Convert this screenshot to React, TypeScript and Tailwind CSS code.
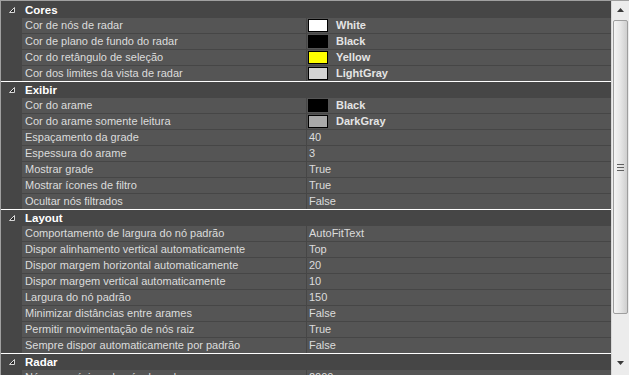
type Row = { name: string; value: string; color?: string };
type Category = { title: string; rows: Row[] };

const categories: Category[] = [
  {
    title: "Cores",
    rows: [
      { name: "Cor de nós de radar", value: "White", color: "#ffffff" },
      { name: "Cor de plano de fundo do radar", value: "Black", color: "#000000" },
      { name: "Cor do retângulo de seleção", value: "Yellow", color: "#ffff00" },
      { name: "Cor dos limites da vista de radar", value: "LightGray", color: "#d3d3d3" },
    ],
  },
  {
    title: "Exibir",
    rows: [
      { name: "Cor do arame", value: "Black", color: "#000000" },
      { name: "Cor do arame somente leitura", value: "DarkGray", color: "#a9a9a9" },
      { name: "Espaçamento da grade", value: "40" },
      { name: "Espessura do arame", value: "3" },
      { name: "Mostrar grade", value: "True" },
      { name: "Mostrar ícones de filtro", value: "True" },
      { name: "Ocultar nós filtrados", value: "False" },
    ],
  },
  {
    title: "Layout",
    rows: [
      { name: "Comportamento de largura do nó padrão", value: "AutoFitText" },
      { name: "Dispor alinhamento vertical automaticamente", value: "Top" },
      { name: "Dispor margem horizontal automaticamente", value: "20" },
      { name: "Dispor margem vertical automaticamente", value: "10" },
      { name: "Largura do nó padrão", value: "150" },
      { name: "Minimizar distâncias entre arames", value: "False" },
      { name: "Permitir movimentação de nós raiz", value: "True" },
      { name: "Sempre dispor automaticamente por padrão", value: "False" },
    ],
  },
  {
    title: "Radar",
    rows: [{ name: "Número máximo de nós do radar", value: "2000" }],
  },
];

const Glyph = () => (
  <svg width="6" height="6" viewBox="0 0 6 6" className="block">
    <polygon points="5.5,0.5 5.5,5.5 0.5,5.5" fill="#2a2a2a" stroke="#d8d8d8" strokeWidth="1" />
  </svg>
);

const PropRow = ({ row, last }: { row: Row; last: boolean }) => (
  <div
    className={`flex h-[16px] shrink-0 border-b ${last ? "border-white" : "border-[#464646]"}`}
  >
    <div className="w-[21px] shrink-0 bg-[#464646]" />
    <div className="w-[284px] shrink-0 bg-[#555555] pl-[3px] leading-[15px] text-[#dcdcdc] whitespace-nowrap overflow-hidden">
      {row.name}
    </div>
    <div className="w-px shrink-0 bg-[#464646]" />
    {row.color ? (
      <div className="flex-1 bg-[#555555] flex items-center pl-[1px]">
        <div
          className="w-[20px] h-[13px] border border-black shrink-0"
          style={{ backgroundColor: row.color }}
        />
        <span className="ml-[8px] font-bold text-[#e4e4e4] leading-[15px]">{row.value}</span>
      </div>
    ) : (
      <div className="flex-1 bg-[#555555] pl-[2px] leading-[15px] text-[#dcdcdc]">{row.value}</div>
    )}
  </div>
);

const Scrollbar = () => (
  <div className="w-[18px] shrink-0 bg-[#ececec] border-l border-[#d8d8d8] flex flex-col">
    <div className="h-[17px] flex items-center justify-center">
      <svg width="7" height="4" viewBox="0 0 7 4">
        <polygon points="3.5,0 7,4 0,4" fill="#3a3a3a" />
      </svg>
    </div>
    <div className="mt-[2px] h-[294px] mx-[1px] rounded-[2px] border border-[#9e9e9e] bg-gradient-to-r from-[#f4f4f4] via-[#e6e6e6] to-[#cfcfcf] flex items-center justify-center">
      <div className="flex flex-col gap-[2px]">
        <div className="w-[7px] h-px bg-[#606060]" />
        <div className="w-[7px] h-px bg-[#606060]" />
        <div className="w-[7px] h-px bg-[#606060]" />
      </div>
    </div>
    <div className="flex-1" />
    <div className="h-[17px] flex items-center justify-center mb-[4px]">
      <svg width="7" height="4" viewBox="0 0 7 4">
        <polygon points="0,0 7,0 3.5,4" fill="#3a3a3a" />
      </svg>
    </div>
  </div>
);

export default function App() {
  return (
    <div
      className="w-[629px] h-[375px] overflow-hidden flex border-t border-l border-[#a0a0a0] bg-[#464646] text-[11px]"
      style={{ fontFamily: '"Liberation Sans", Arial, sans-serif' }}
    >
      <div className="flex-1 flex flex-col pt-px">
        {categories.map((cat) => (
          <div key={cat.title} className="flex flex-col shrink-0">
            <div className="h-[16px] shrink-0 flex items-center bg-[#464646]">
              <div className="w-[24px] shrink-0 pl-[8px]">
                <Glyph />
              </div>
              <span className="font-bold text-white text-[11.5px] leading-[16px]">{cat.title}</span>
            </div>
            {cat.rows.map((row, i) => (
              <PropRow key={row.name} row={row} last={i === cat.rows.length - 1 && cat.title !== "Radar"} />
            ))}
          </div>
        ))}
      </div>
      <Scrollbar />
    </div>
  );
}
